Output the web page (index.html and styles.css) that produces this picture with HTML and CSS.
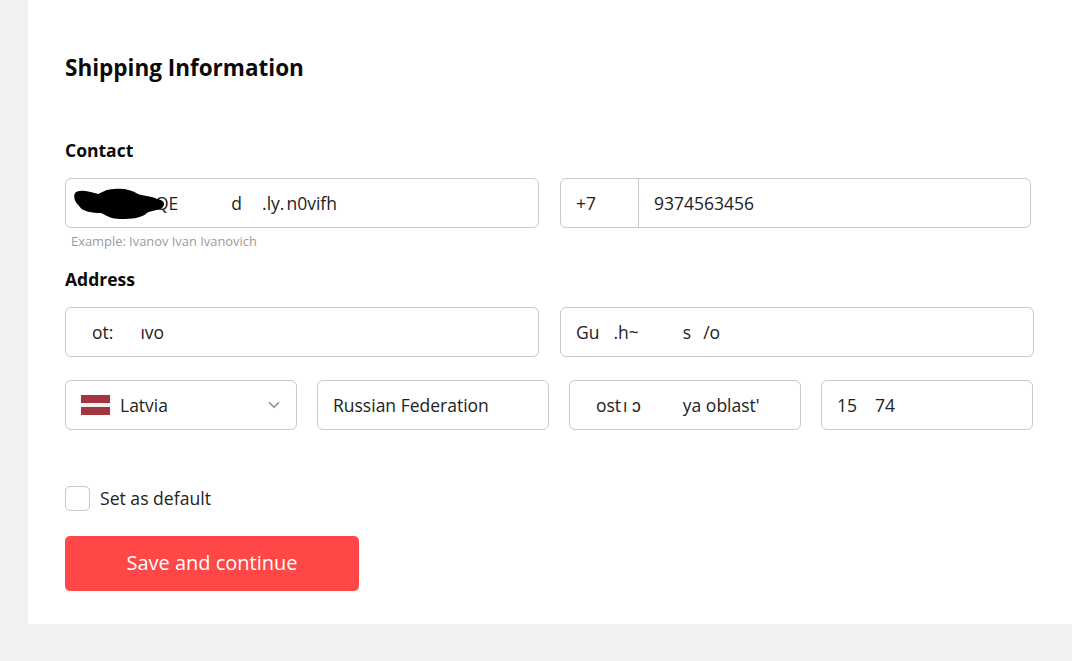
FILE: index.html
```html
<!DOCTYPE html>
<html lang="en">
<head>
<meta charset="utf-8">
<title>Shipping Information</title>
<link rel="stylesheet" href="styles.css">
</head>
<body>
<main class="panel">
  <h1 class="title">Shipping Information</h1>

  <h2 class="label label-contact">Contact</h2>
  <div class="row row-contact">
    <div class="col-name">
      <div class="field field-name">
        <svg class="blob" width="92" height="32" viewBox="0 0 92 32"><path d="M1 5C5 1 14 3 24 6C28 5 31 1 40 1C50 0 58 2 64 6C70 8 78 8 83 11C90 12 92 16 88 20C84 23 77 22 73 25C68 30 58 31 46 31C38 31 33 28 27 25C18 25 9 24 5 18C1 14-1 9 1 5Z" fill="#000"/></svg>
        <span class="seg s-qe">QE</span><span class="seg s-d">d</span><span class="seg s-ly">.ly.</span><span class="seg s-tail">n0vifh</span>
      </div>
      <p class="hint">Example: Ivanov Ivan Ivanovich</p>
    </div>
    <div class="field field-phone">
      <span class="code">+7</span>
      <span class="phone">9374563456</span>
    </div>
  </div>

  <h2 class="label label-address">Address</h2>
  <div class="row row-addr">
    <div class="field field-a"><span class="seg s-ot">ot:</span><span class="seg s-vo">ıvo</span></div>
    <div class="field field-b"><span class="seg">Gu</span><span class="seg s-h">.h~</span><span class="seg s-s">s</span><span class="seg s-o">/o</span></div>
  </div>
  <div class="row row-region">
    <div class="field field-small select">
      <svg class="flag" width="29" height="20" viewBox="0 0 29 20"><rect width="29" height="8" fill="#a4343f"/><rect y="8" width="29" height="4" fill="#f4eeee"/><rect y="12" width="29" height="8" fill="#a4343f"/></svg>
      <span class="country">Latvia</span>
      <svg class="chevron" width="12" height="8" viewBox="0 0 12 8"><path d="M1 1.2L6 6.2L11 1.2" fill="none" stroke="#8a8a8a" stroke-width="1.5"/></svg>
    </div>
    <div class="field field-small">Russian Federation</div>
    <div class="field field-small"><span class="seg s-ost">ost</span><span class="seg s-j">ı ɔ</span><span class="seg s-ya">ya oblast'</span></div>
    <div class="field field-zip"><span class="seg">15</span><span class="seg s-74">74</span></div>
  </div>

  <label class="check-row">
    <span class="check"></span>
    <span class="check-text">Set as default</span>
  </label>
  <button class="save" type="button">Save and continue</button>
</main>
</body>
</html>
```
FILE: styles.css
```css
* { box-sizing: border-box; }
html, body { margin: 0; height: 100%; }
body {
  background: #f1f1f1;
  font-family: "Open Sans", "Liberation Sans", sans-serif;
  color: #1c1c1c;
  overflow: hidden;
}
.panel {
  margin-left: 28px;
  height: 624px;
  background: #fff;
  padding: 52px 0 0 37px;
  display: flex;
  flex-direction: column;
  align-items: flex-start;
}
.title {
  margin: 0;
  font-size: 22.5px;
  line-height: 32px;
  font-weight: 700;
  color: #0a0a0a;
}
.label {
  margin: 0;
  font-size: 17.5px;
  line-height: 24px;
  font-weight: 700;
  color: #0a0a0a;
}
.label-contact { margin-top: 54px; }
.label-address { margin-top: 17px; }
.row { display: flex; align-items: flex-start; }
.row-contact { margin-top: 16px; gap: 21px; }
.row-addr { margin-top: 16px; gap: 21px; }
.row-region { margin-top: 23px; gap: 20px; }
.field {
  height: 50px;
  border: 1px solid #cacaca;
  border-radius: 6px;
  background: #fff;
  display: flex;
  align-items: center;
  padding: 0 15px;
  font-size: 17.5px;
  color: #222;
  white-space: nowrap;
  position: relative;
}
.col-name { width: 474px; }
.field-name { width: 474px; }
.hint {
  margin: 5px 0 0 6px;
  font-size: 12.9px;
  line-height: 17px;
  color: #9b9b9b;
}
.blob { position: absolute; left: 8px; top: 9px; z-index: 1; }
.seg { display: inline-block; }
.s-qe { margin-left: 74px; }
.s-d { margin-left: 53px; }
.s-ly { margin-left: 20px; }
.s-tail { margin-left: 2px; }
.field-phone { width: 471px; padding: 0; }
.code {
  width: 78px;
  height: 100%;
  padding-left: 15px;
  display: flex;
  align-items: center;
  border-right: 1px solid #cacaca;
}
.phone { padding-left: 15px; }
.field-a { width: 474px; padding-left: 26px; }
.s-vo { margin-left: 27px; }
.field-b { width: 474px; }
.s-h { margin-left: 14px; }
.s-s { margin-left: 44px; }
.s-o { margin-left: 12px; }
.field-small { width: 232px; }
.field-zip { width: 212px; }
.select { padding-right: 16px; }
.flag { flex: none; }
.country { margin-left: 10px; flex: 1; }
.chevron { flex: none; }
.s-ost { margin-left: 11px; }
.s-j { margin-left: 2px; }
.s-ya { margin-left: 42px; }
.s-74 { margin-left: 18px; }
.check-row {
  margin-top: 56px;
  display: flex;
  align-items: center;
  gap: 10px;
  font-size: 17.6px;
  line-height: 25px;
  color: #222;
}
.check {
  width: 25px;
  height: 25px;
  border: 1px solid #c8c8c8;
  border-radius: 5px;
  background: #fff;
}
.save {
  margin-top: 25px;
  width: 294px;
  height: 55px;
  border: 0;
  border-radius: 5px;
  background: #ff4747;
  color: #fff;
  font-family: inherit;
  font-size: 20px;
  padding: 0 0 2px;
}
```
